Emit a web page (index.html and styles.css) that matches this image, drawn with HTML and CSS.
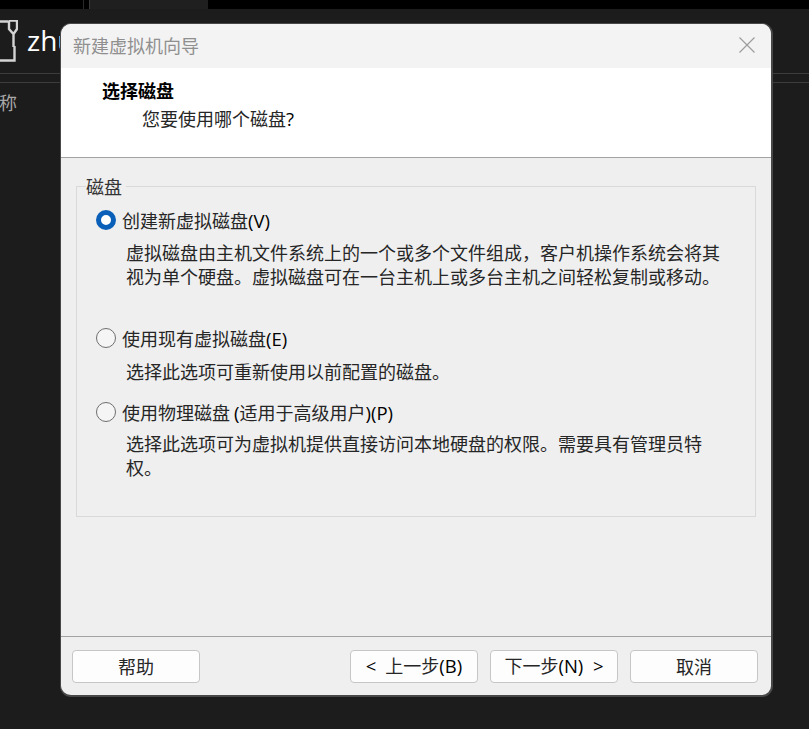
FILE: index.html
```html
<!DOCTYPE html>
<html lang="zh-CN">
<head>
<meta charset="utf-8">
<title>新建虚拟机向导</title>
<link rel="stylesheet" href="styles.css">
</head>
<body>
<div class="app">
  <div class="topstrip"><span class="tab-sep"></span><span class="tab"></span></div>
  <div class="vmhead">
    <svg class="vmicon" width="18" height="42" viewBox="0 0 18 42"><path d="M0 1.500H8.500M0 40.500H14.500V26M9 0.500V9L13.500 14L17 9V0.500H9M13.500 14V27" fill="none" stroke="#d4d4d4" stroke-width="2.400"/></svg>
    <span class="vmname">zhu</span>
  </div>
  <div class="rule"></div>
  <div class="columns">称</div>
</div>

<div class="dialog">
  <div class="titlebar">
    <span class="title">新建虚拟机向导</span>
    <svg class="close" width="16" height="16" viewBox="0 0 16 16"><path d="M0.500 0.500L15.500 15.500M15.500 0.500L0.500 15.500" stroke="#9c9c9c" stroke-width="1.200"/></svg>
  </div>
  <div class="header">
    <div class="h-title">选择磁盘</div>
    <div class="h-sub">您要使用哪个磁盘<span class="lat">?</span></div>
  </div>
  <div class="body">
    <fieldset class="group">
      <legend class="legend">磁盘</legend>
      <div class="option first">
        <div class="radio-row"><span class="radio checked"></span><span>创建新虚拟磁盘<span class="lat">(V)</span></span></div>
        <p class="desc">虚拟磁盘由主机文件系统上的一个或多个文件组成，客户机操作系统会将其<br>视为单个硬盘。虚拟磁盘可在一台主机上或多台主机之间轻松复制或移动。</p>
      </div>
      <div class="option second">
        <div class="radio-row"><span class="radio"></span><span>使用现有虚拟磁盘<span class="lat">(E)</span></span></div>
        <p class="desc">选择此选项可重新使用以前配置的磁盘。</p>
      </div>
      <div class="option third">
        <div class="radio-row"><span class="radio"></span><span>使用物理磁盘 <span class="lat">(</span>适用于高级用户<span class="lat">)(P)</span></span></div>
        <p class="desc">选择此选项可为虚拟机提供直接访问本地硬盘的权限。需要具有管理员特<br>权。</p>
      </div>
    </fieldset>
  </div>
  <div class="footer">
    <button class="btn help">帮助</button>
    <button class="btn"><span class="lat">&lt;&nbsp;</span> 上一步<span class="lat">(B)</span></button>
    <button class="btn">下一步<span class="lat">(N) &nbsp;&gt;</span></button>
    <button class="btn">取消</button>
  </div>
</div>
</body>
</html>
```
FILE: styles.css
```css
* { box-sizing: border-box; }
html, body { margin: 0; height: 100%; }
body {
  background: #1c1c1c;
  font-family: "Noto Sans CJK SC", "Noto Sans", sans-serif;
  overflow: hidden;
  position: relative;
  height: 729px;
}
.app { color: #ddd; }
.topstrip { height: 9px; background: #000; display: flex; padding-left: 83px; }
.tab-sep { width: 7px; height: 9px; background: #000; border-left: 1px solid #2a2a2a; border-right: 1px solid #3a3a3a; }
.tab { width: 118px; height: 9px; background: #1f1f1f; }
.vmhead { height: 64px; display: flex; align-items: flex-start; padding-top: 11px; gap: 9px; }
.vmicon { flex: none; }
.vmname { font-size: 28px; line-height: 40px; color: #fff; font-family: "Open Sans", sans-serif; }
.rule { height: 10px; border-top: 1px solid #3c3c3c; border-bottom: 1px solid #3c3c3c; }
.columns { font-size: 18px; line-height: 24px; color: #a8a8a8; margin-top: 7px; margin-left: -1px; }

.lat { font-family: "Open Sans", "Noto Sans", sans-serif; font-size: 18.500px; color: #000; }

.dialog {
  position: absolute;
  left: 60px;
  top: 23px;
  width: 713px;
  height: 674px;
  background: #efefef;
  border-style: solid;
  border-color: #484848;
  border-width: 1px 2px 2px 1px;
  border-radius: 11px;
  display: flex;
  flex-direction: column;
  overflow: hidden;
  color: #262626;
  font-size: 18px;
  line-height: 24px;
}
.titlebar {
  height: 44px;
  flex: none;
  background: #f3f3f3;
  display: flex;
  align-items: center;
  justify-content: space-between;
  padding: 0 16px 2px 12px;
}
.title { color: #8f8f8f; }
.header {
  height: 90px;
  flex: none;
  background: #fff;
  border-bottom: 1px solid #a3a3a3;
  padding: 10px 0 0 41px;
}
.h-title { font-weight: 700; color: #000; }
.h-sub { margin-left: 40px; margin-top: 4px; }
.body { flex: 1; padding: 16px 15px 0 15px; }
.group {
  margin: 0;
  padding: 0 0 0 19px;
  width: 680px;
  height: 343px;
  border: 1px solid #d9d9d9;
}
.legend { margin-left: -10px; padding: 0 4px 0 0; color: #333; line-height: 24px; }
.radio-row { display: flex; align-items: center; gap: 6px; height: 24px; }
.radio {
  flex: none;
  width: 20px;
  height: 20px;
  border-radius: 50%;
  background: #f5f5f5;
  border: 1.500px solid #6e6e6e;
}
.radio.checked { background: #fff; border: 5.500px solid #0a5fb8; }
.desc { margin: 8px 0 0 30px; }
.first { margin-top: 10px; }
.second { margin-top: 38px; }
.second .desc { margin-top: 9px; }
.third { margin-top: 17px; }
.third .desc { margin-top: 7px; }
.footer {
  height: 59px;
  flex: none;
  border-top: 1px solid #a3a3a3;
  display: flex;
  gap: 12px;
  padding: 13px 12px 0 11px;
}
.btn {
  width: 128px;
  height: 33px;
  background: #fdfdfd;
  border: 1px solid #c6c6c6;
  border-radius: 4px;
  font: inherit;
  line-height: 24px;
  color: #262626;
  padding: 0 0 2px;
}
.help { margin-right: 138px; }
```
